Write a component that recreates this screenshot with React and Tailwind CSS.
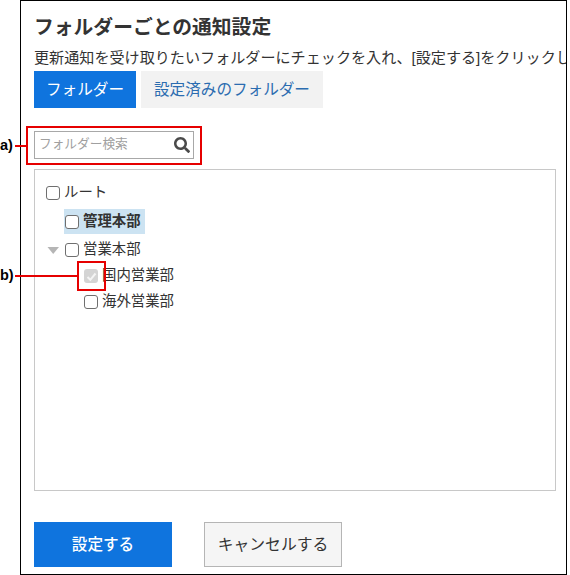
import { FaSearch } from 'react-icons/fa'

const font = { fontFamily: '"Liberation Sans", "Noto Sans CJK JP", sans-serif' }

function Box({ checked = false }) {
  if (checked) {
    return (
      <span className="flex h-[14px] w-[14px] shrink-0 items-center justify-center rounded-[3px] bg-[#d4d4d4]">
        <svg width="11" height="11" viewBox="0 0 11 11">
          <path d="M1.5 6 L4.3 8.8 L9.5 2.5" fill="none" stroke="#f4f4f4" strokeWidth="2" />
        </svg>
      </span>
    )
  }
  return <span className="h-[14px] w-[14px] shrink-0 rounded-[3px] border border-[#6f6f6f] bg-white" />
}

function Row({ label, indent, checked, children }) {
  return (
    <div className={`flex h-[26px] items-center gap-[4px] ${indent}`}>
      {children}
      <Box checked={checked} />
      <span className="-translate-y-px text-[14.4px] leading-none text-[#333]">{label}</span>
    </div>
  )
}

export default function App() {
  return (
    <div className="relative h-[575px] w-[570px] overflow-hidden bg-white" style={font}>
      <div className="ml-[20px] h-[575px] w-[547px] overflow-hidden border border-black pl-[13px] pt-[13px]">
        <h1 className="h-[26px] text-[19.8px] font-bold leading-[26px] text-[#333]">フォルダーごとの通知設定</h1>
        <p className="mt-[6px] h-[25px] whitespace-nowrap text-[15.1px] leading-[24px] text-[#333]">
          更新通知を受け取りたいフォルダーにチェックを入れ、[設定する]をクリックします。
        </p>

        <div className="flex gap-[5px]">
          <button className="h-[37px] w-[102px] bg-[#0f74de] text-[15.6px] text-white">フォルダー</button>
          <button className="h-[37px] w-[182px] bg-[#f2f2f2] text-[15.6px] text-[#2b6cb0]">設定済みのフォルダー</button>
        </div>

        <div className="mt-[23px] flex h-[28px] w-[160px] items-center justify-between border border-[#a8a8a8] pl-[4px] pr-[3px]">
          <span className="text-[12.7px] text-[#a0a0a0]">フォルダー検索</span>
          <FaSearch size={16} className="text-[#4a4a4a]" />
        </div>

        <div className="mt-[10px] h-[322px] w-[522px] border border-[#c8c8c8] pl-[11px] pt-[10px]">
          <Row label="ルート" indent="" />
          <div className="ml-[18px] flex h-[31px] items-center">
            <div className="flex h-[25px] w-[81px] items-center gap-[4px] bg-[#cce3f2] pl-[1px]">
              <Box />
              <span className="text-[14.4px] font-bold leading-none text-[#333]">管理本部</span>
            </div>
          </div>
          <Row label="営業本部" indent="">
            <svg width="13" height="9" viewBox="0 0 13 9" className="ml-[1px] mr-[1px]">
              <path d="M0.5 1 H12 L6.2 8 Z" fill="#b5b5b5" />
            </svg>
          </Row>
          <Row label="国内営業部" indent="ml-[38px]" checked />
          <Row label="海外営業部" indent="ml-[38px]" />
        </div>

        <div className="mt-[31px] flex gap-[32px]">
          <button className="h-[45px] w-[138px] bg-[#0f74de] text-[15.6px] font-medium text-white">設定する</button>
          <button className="h-[45px] w-[138px] border border-[#b5b5b5] bg-[#f5f5f5] text-[15.8px] text-[#333]">キャンセルする</button>
        </div>
      </div>

      {/* annotations */}
      <div className="absolute left-[26px] top-[126px] h-[39px] w-[176px] border-2 border-[#e60000]" />
      <div className="absolute left-[15px] top-[145px] h-[1.5px] w-[11px] bg-[#e60000]" />
      <span className="absolute left-0 top-[137px] text-[14.5px] font-bold leading-[16px] text-black">a)</span>

      <div className="absolute left-[77px] top-[261px] h-[30px] w-[29px] border-2 border-[#e60000]" />
      <div className="absolute left-[15px] top-[275px] h-[1.5px] w-[62px] bg-[#e60000]" />
      <span className="absolute left-0 top-[267px] text-[14.5px] font-bold leading-[16px] text-black">b)</span>
    </div>
  )
}
